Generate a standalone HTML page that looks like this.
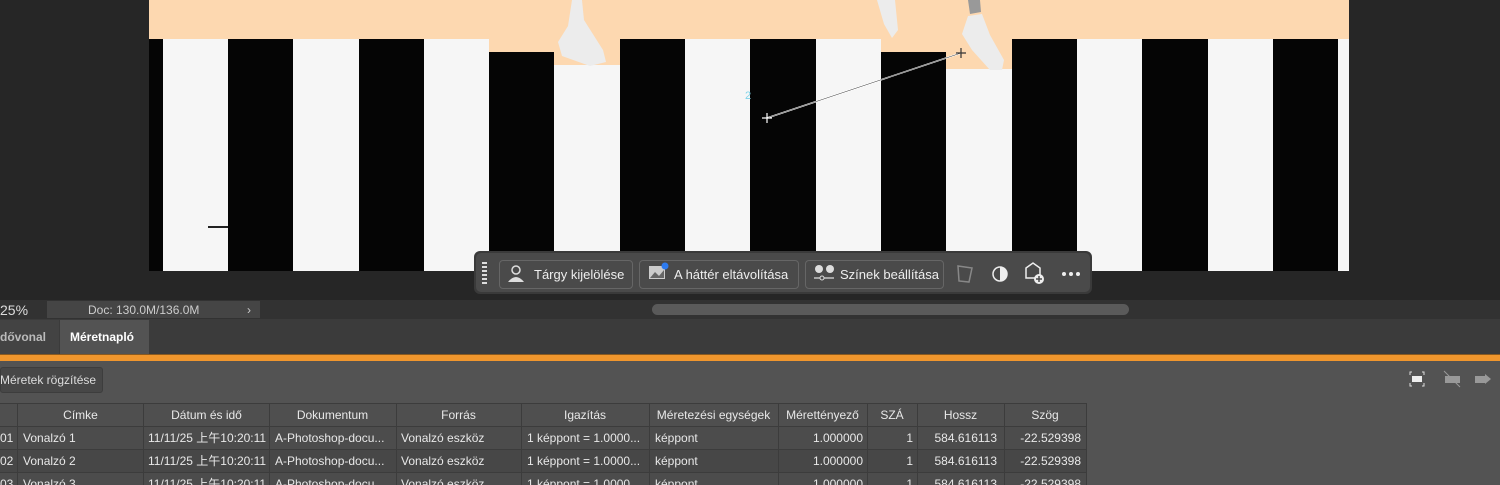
<!DOCTYPE html>
<html><head><meta charset="utf-8"><style>
*{margin:0;padding:0;box-sizing:border-box}
html,body{width:1500px;height:485px;overflow:hidden}
body{background:#262626;font-family:"Liberation Sans","Noto Sans CJK SC",sans-serif;position:relative}
.a{position:absolute}
.peach{background:#fdd8b0}
.w{background:#f6f6f6}
.k{background:#050505}
.btn{position:absolute;top:260px;height:29px;border:1px solid #666;border-radius:4px;color:#eee;font-size:13px;line-height:27px;padding-left:34px;white-space:nowrap;overflow:hidden}
.t{position:absolute;font-size:12px;color:#e8e8e8;line-height:22px;white-space:nowrap}
.r{text-align:right}
.c{text-align:center}
</style></head><body>
<div class="a peach" style="left:149px;top:0;width:1200px;height:271px"></div>
<div class="a k" style="left:149px;top:39px;width:14px;height:232px"></div>
<div class="a w" style="left:163px;top:39px;width:65px;height:232px"></div>
<div class="a k" style="left:228px;top:39px;width:65px;height:232px"></div>
<div class="a w" style="left:293px;top:39px;width:66px;height:232px"></div>
<div class="a k" style="left:359px;top:39px;width:65px;height:232px"></div>
<div class="a w" style="left:424px;top:39px;width:65px;height:232px"></div>
<div class="a k" style="left:489px;top:52px;width:65px;height:219px"></div>
<div class="a w" style="left:554px;top:65px;width:66px;height:206px"></div>
<div class="a k" style="left:620px;top:39px;width:65px;height:232px"></div>
<div class="a w" style="left:685px;top:39px;width:65px;height:232px"></div>
<div class="a k" style="left:750px;top:39px;width:66px;height:232px"></div>
<div class="a w" style="left:816px;top:39px;width:65px;height:232px"></div>
<div class="a k" style="left:881px;top:52px;width:65px;height:219px"></div>
<div class="a w" style="left:946px;top:69px;width:66px;height:202px"></div>
<div class="a k" style="left:1012px;top:39px;width:65px;height:232px"></div>
<div class="a w" style="left:1077px;top:39px;width:65px;height:232px"></div>
<div class="a k" style="left:1142px;top:39px;width:66px;height:232px"></div>
<div class="a w" style="left:1208px;top:39px;width:65px;height:232px"></div>
<div class="a k" style="left:1273px;top:39px;width:65px;height:232px"></div>
<div class="a w" style="left:1338px;top:39px;width:11px;height:232px"></div>
<svg class="a" style="left:0;top:0" width="1500" height="300">
<path d="M572 0 L582 0 L584 20 L603 50 L606 62 L590 66 L562 56 L558 42 L568 26Z" fill="#ececec"/>
<path d="M877 0 L895 0 L898 30 L892 38 L884 24Z" fill="#ececec"/>
<path d="M968 0 L980 0 L981 12 L970 14Z" fill="#999"/>
<path d="M968 16 L982 14 L990 35 L1004 60 L1002 70 L990 70 L972 50 L962 34Z" fill="#ececec"/>
<line x1="767" y1="118" x2="961" y2="53" stroke="#fff" stroke-width="1.5"/>
<line x1="767" y1="118" x2="961" y2="53" stroke="#333" stroke-width="0.5"/>
<path d="M762 118h10M767 113v10" stroke="#fff" stroke-width="1.2"/>
<path d="M956 53h10M961 48v10" stroke="#333" stroke-width="1.2"/>
<text x="745" y="99" fill="#7fd3e8" font-size="11" font-family="Liberation Sans">2</text>
<rect x="208" y="226" width="20" height="2" fill="#222"/>
</svg>
<div class="a" style="left:474px;top:251px;width:618px;height:43px;background:#3a3a3a;border-radius:6px"></div>
<div class="a" style="left:476px;top:253px;width:614px;height:39px;background:#4a4a4a;border-radius:5px"></div>
<div class="a" style="left:482px;top:262px;width:5px;height:24px;background:repeating-linear-gradient(#ddd 0 2px,transparent 2px 4px)"></div>
<div class="btn" style="left:499px;width:134px">Tárgy kijelölése</div>
<div class="btn" style="left:639px;width:160px">A háttér eltávolítása</div>
<div class="btn" style="left:805px;width:139px">Színek beállítása</div>
<svg class="a" style="left:474px;top:251px" width="620" height="43">
<circle cx="42" cy="19" r="4" fill="none" stroke="#ddd" stroke-width="1.5"/><path d="M34 31q8-10 16 0z" fill="#ddd"/>
<rect x="175" y="15" width="16" height="13" fill="#ccc"/><path d="M176 27l5-6 4 4 5-6v8z" fill="#666"/><circle cx="191" cy="15" r="3.5" fill="#2d7bf0"/>
<circle cx="345" cy="18" r="4" fill="#ddd"/><circle cx="356" cy="18" r="4" fill="#ddd"/><path d="M340 27h20" stroke="#ddd" stroke-width="1.3"/><circle cx="348" cy="27" r="2" fill="#4a4a4a" stroke="#ddd"/>
<path d="M484 15l14 2 -3 14 -10 -1z" fill="none" stroke="#888" stroke-width="1.5"/>
<circle cx="526" cy="23" r="7" fill="none" stroke="#eee" stroke-width="1.5"/><path d="M526 16a7 7 0 0 1 0 14z" fill="#eee"/>
<path d="M552 17l7-5 7 5v10h-14z" fill="none" stroke="#eee" stroke-width="1.5"/><circle cx="565" cy="28" r="5" fill="#eee"/><path d="M565 25v6M562 28h6" stroke="#4a4a4a" stroke-width="1.5"/>
<circle cx="590" cy="23" r="2" fill="#eee"/><circle cx="597" cy="23" r="2" fill="#eee"/><circle cx="604" cy="23" r="2" fill="#eee"/>
</svg>
<div class="a" style="left:0;top:300px;width:1500px;height:19px;background:#323232"></div>
<div class="t" style="left:0;top:300px;font-size:14px;line-height:20px;color:#ddd">25%</div>
<div class="a" style="left:47px;top:301px;width:213px;height:17px;background:#454545"></div>
<div class="t" style="left:88px;top:299px;color:#ccc">Doc: 130.0M/136.0M</div>
<div class="t" style="left:247px;top:299px;color:#ccc">›</div>
<div class="a" style="left:652px;top:304px;width:477px;height:11px;background:#5a5a5a;border-radius:6px"></div>
<div class="a" style="left:0;top:319px;width:1500px;height:35px;background:#3b3b3b"></div>
<div class="a" style="left:0;top:320px;width:59px;height:34px;background:#434343"></div>
<div class="a" style="left:60px;top:320px;width:89px;height:34px;background:#535353"></div>
<div class="t" style="left:0;top:326px;color:#bbb;font-weight:bold">dővonal</div>
<div class="t" style="left:70px;top:326px;color:#fff;font-weight:bold">Méretnapló</div>
<div class="a" style="left:0;top:354px;width:1500px;height:7px;background:#f0962d;border-top:1px solid #8a5a20"></div>
<div class="a" style="left:0;top:361px;width:1500px;height:124px;background:#535353"></div>
<div class="a" style="left:0;top:367px;width:103px;height:26px;background:#474747;border:1px solid #3d3d3d;border-radius:3px"></div>
<div class="t" style="left:0;top:369px;color:#ddd">Méretek rögzítése</div>
<svg class="a" style="left:1405px;top:367px" width="95" height="24">
<path d="M7 5h-2v3M17 5h2v3M7 19h-2v-3M17 19h2v-3" stroke="#ddd" fill="none"/><rect x="7" y="9" width="10" height="6" fill="#eee"/>
<rect x="40" y="9" width="15" height="7" fill="#999"/><path d="M39 4l16 16" stroke="#999"/>
<rect x="70" y="9" width="10" height="7" fill="#999"/><path d="M80 7l6 5-6 5z" fill="#999"/>
</svg>
<div class="a" style="left:0;top:403px;width:1087px;height:82px;background:#3c3c3c"></div>
<div class="a" style="left:0;top:404px;width:1087px;height:22px;background:#4f4f4f"></div>
<div class="a" style="left:0;top:427px;width:1087px;height:22px;background:#4c4c4c"></div>
<div class="a" style="left:0;top:450px;width:1087px;height:22px;background:#474747"></div>
<div class="a" style="left:0;top:473px;width:1087px;height:12px;background:#4c4c4c"></div>
<svg class="a" style="left:0;top:404px" width="1090" height="81">
<g stroke="#3c3c3c"><path d="M17.5 0v81M143.5 0v81M269.5 0v81M396.5 0v81M521.5 0v81M649.5 0v81M778.5 0v81M867.5 0v81M917.5 0v81M1004.5 0v81M1086.5 0v81"/></g>
</svg>
<div class="t c" style="left:17px;top:404px;width:127px">Címke</div>
<div class="t c" style="left:143px;top:404px;width:127px">Dátum és idő</div>
<div class="t c" style="left:269px;top:404px;width:127px">Dokumentum</div>
<div class="t c" style="left:396px;top:404px;width:125px">Forrás</div>
<div class="t c" style="left:521px;top:404px;width:128px">Igazítás</div>
<div class="t c" style="left:649px;top:404px;width:129px">Méretezési egységek</div>
<div class="t c" style="left:778px;top:404px;width:89px">Mérettényező</div>
<div class="t c" style="left:867px;top:404px;width:50px">SZÁ</div>
<div class="t c" style="left:917px;top:404px;width:87px">Hossz</div>
<div class="t c" style="left:1004px;top:404px;width:82px">Szög</div>

<div class="t" style="left:0;top:427px">01</div><div class="t" style="left:23px;top:427px">Vonalzó 1</div><div class="t" style="left:148px;top:427px">11/11/25 上午10:20:11</div><div class="t" style="left:275px;top:427px">A-Photoshop-docu...</div><div class="t" style="left:401px;top:427px">Vonalzó eszköz</div><div class="t" style="left:527px;top:427px">1 képpont = 1.0000...</div><div class="t" style="left:655px;top:427px">képpont</div><div class="t r" style="left:778px;top:427px;width:85px">1.000000</div><div class="t r" style="left:867px;top:427px;width:46px">1</div><div class="t r" style="left:917px;top:427px;width:80px">584.616113</div><div class="t r" style="left:1004px;top:427px;width:77px">-22.529398</div>

<div class="t" style="left:0;top:450px">02</div><div class="t" style="left:23px;top:450px">Vonalzó 2</div><div class="t" style="left:148px;top:450px">11/11/25 上午10:20:11</div><div class="t" style="left:275px;top:450px">A-Photoshop-docu...</div><div class="t" style="left:401px;top:450px">Vonalzó eszköz</div><div class="t" style="left:527px;top:450px">1 képpont = 1.0000...</div><div class="t" style="left:655px;top:450px">képpont</div><div class="t r" style="left:778px;top:450px;width:85px">1.000000</div><div class="t r" style="left:867px;top:450px;width:46px">1</div><div class="t r" style="left:917px;top:450px;width:80px">584.616113</div><div class="t r" style="left:1004px;top:450px;width:77px">-22.529398</div>

<div class="t" style="left:0;top:473px">03</div><div class="t" style="left:23px;top:473px">Vonalzó 3</div><div class="t" style="left:148px;top:473px">11/11/25 上午10:20:11</div><div class="t" style="left:275px;top:473px">A-Photoshop-docu...</div><div class="t" style="left:401px;top:473px">Vonalzó eszköz</div><div class="t" style="left:527px;top:473px">1 képpont = 1.0000...</div><div class="t" style="left:655px;top:473px">képpont</div><div class="t r" style="left:778px;top:473px;width:85px">1.000000</div><div class="t r" style="left:867px;top:473px;width:46px">1</div><div class="t r" style="left:917px;top:473px;width:80px">584.616113</div><div class="t r" style="left:1004px;top:473px;width:77px">-22.529398</div>
</body></html>
